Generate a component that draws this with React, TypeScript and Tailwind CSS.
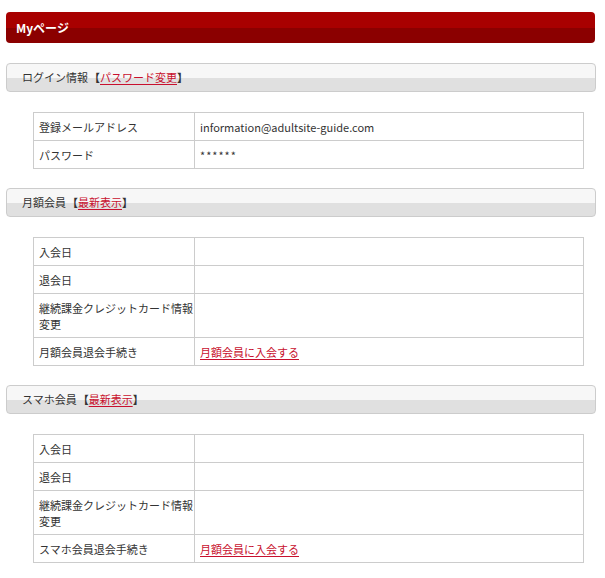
const jp = { fontFamily: '"Noto Sans CJK JP", "Liberation Sans", sans-serif' };

type Row = { label: React.ReactNode; value?: React.ReactNode };

function LinkText({ children }: { children: React.ReactNode }) {
  return <a href="#" className="text-[#c8102e] underline underline-offset-2">{children}</a>;
}

function SectionBar({ title, link }: { title: string; link: string }) {
  return (
    <div className="h-[29px] w-[590px] rounded-[4px] border border-[#cccccc] bg-[linear-gradient(#f7f7f7_0%,#f7f7f7_50%,#e0e0e0_52%,#e0e0e0_100%)] pl-[15px] flex items-center text-[11px] text-[#333]">
      <span>{title}</span>
      <span className="ml-[1px] font-bold">【</span>
      <LinkText>{link}</LinkText>
      <span className="font-bold">】</span>
    </div>
  );
}

function InfoTable({ rows }: { rows: Row[] }) {
  return (
    <table className="ml-[27px] w-[551px] table-fixed border-collapse text-[11px] leading-[16px] text-[#333]">
      <colgroup>
        <col className="w-[161px]" />
        <col />
      </colgroup>
      <tbody>
        {rows.map((r, i) => (
          <tr key={i}>
            <td className="border border-[#cccccc] pl-[5px] pr-0 pt-[6px] pb-[5px] align-top whitespace-nowrap">{r.label}</td>
            <td className="border border-[#cccccc] pl-[5px] pt-[6px] pb-[5px] align-top">{r.value}</td>
          </tr>
        ))}
      </tbody>
    </table>
  );
}

const memberRows = (name: string): Row[] => [
  { label: '入会日' },
  { label: '退会日' },
  { label: <>継続課金クレジットカード情報<br />変更</> },
  { label: `${name}退会手続き`, value: <LinkText>月額会員に入会する</LinkText> },
];

export default function App() {
  return (
    <div className="w-[605px] min-h-[578px] bg-white px-[6px] pt-[12px]" style={jp}>
      <div className="h-[31px] w-[589px] rounded-[4px] bg-[linear-gradient(#a80000_0%,#a80000_50%,#8b0000_52%,#8b0000_100%)] pl-[10px] flex items-center text-white text-[12px] font-bold">
        Myページ
      </div>

      <div className="mt-[20px]">
        <SectionBar title="ログイン情報" link="パスワード変更" />
      </div>
      <div className="mt-[20px]">
        <InfoTable
          rows={[
            { label: '登録メールアドレス', value: 'information@adultsite-guide.com' },
            { label: 'パスワード', value: <span className="tracking-[1px]">******</span> },
          ]}
        />
      </div>

      <div className="mt-[19px]">
        <SectionBar title="月額会員" link="最新表示" />
      </div>
      <div className="mt-[20px]">
        <InfoTable rows={memberRows('月額会員')} />
      </div>

      <div className="mt-[19px]">
        <SectionBar title="スマホ会員" link="最新表示" />
      </div>
      <div className="mt-[20px]">
        <InfoTable rows={memberRows('スマホ会員')} />
      </div>
    </div>
  );
}
